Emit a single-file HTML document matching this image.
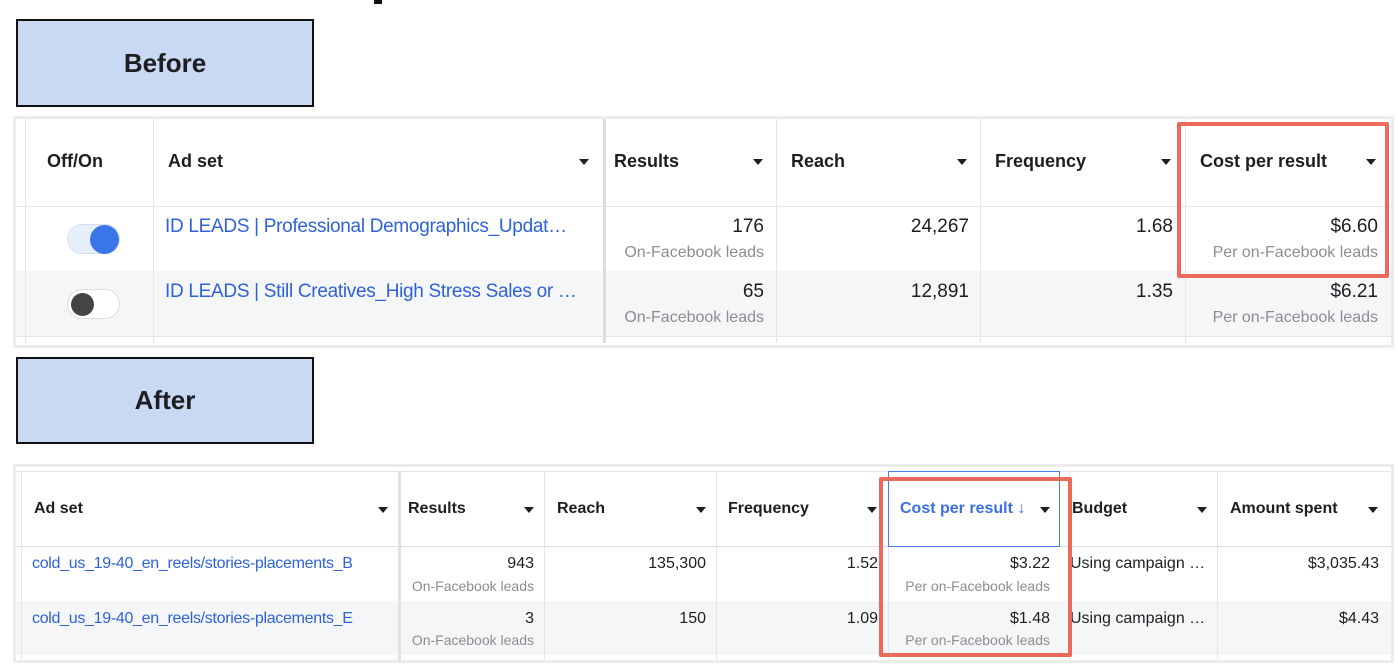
<!DOCTYPE html>
<html><head><meta charset="utf-8"><style>
*{margin:0;padding:0;box-sizing:border-box}
body{width:1398px;height:666px;background:#fff;position:relative;overflow:hidden;font-family:"Liberation Sans",Arial,sans-serif;color:#1c1e21}
.a{position:absolute}
.lbl{background:#c9d8f3;border:2px solid #111;font-weight:bold;font-size:26px;display:flex;align-items:center;justify-content:center}
.frame{border:3px solid #ececec;background:#fff}
.v{position:absolute;width:1px;background:#e4e6eb}
.h{position:absolute;height:1px;background:#e4e6eb}
.th{position:absolute;font-weight:bold}
.tri{position:absolute;width:0;height:0;border-left:5px solid transparent;border-right:5px solid transparent;border-top:6px solid #1c1e21}
.lnk{position:absolute;color:#2e62d9;white-space:nowrap;letter-spacing:-0.3px}
.num{position:absolute;text-align:right}
.sub{position:absolute;text-align:right;color:#8a8d91}
.red{position:absolute;border:4px solid #ec6a5c;border-radius:2px}
</style></head><body>
<div class="a" style="left:374px;top:0;width:8px;height:4px;background:#111"></div>
<div class="a lbl" style="left:16px;top:19px;width:298px;height:88px">Before</div>
<div class="a lbl" style="left:16px;top:357px;width:298px;height:87px">After</div>

<!-- BEFORE TABLE -->
<div class="a frame" style="left:13px;top:116px;width:1381px;height:232px"></div>
<div class="a" style="left:16px;top:271px;width:1375px;height:65px;background:#f5f6f7"></div>
<div class="h" style="left:16px;top:206px;width:1375px"></div>
<div class="h" style="left:16px;top:336px;width:1375px"></div>
<div class="v" style="left:25px;top:119px;height:224px"></div>
<div class="v" style="left:153px;top:119px;height:224px"></div>
<div class="v" style="left:603px;top:119px;height:224px;width:3px;background:#dcdde0"></div>
<div class="v" style="left:776px;top:119px;height:224px"></div>
<div class="v" style="left:980px;top:119px;height:224px"></div>
<div class="v" style="left:1185px;top:119px;height:224px"></div>
<div class="th" style="left:47px;top:151px;font-size:18px">Off/On</div>
<div class="th" style="left:168px;top:151px;font-size:18px">Ad set</div>
<div class="tri" style="left:579px;top:159px"></div>
<div class="th" style="left:614px;top:151px;font-size:18px">Results</div>
<div class="tri" style="left:753px;top:159px"></div>
<div class="th" style="left:791px;top:151px;font-size:18px">Reach</div>
<div class="tri" style="left:957px;top:159px"></div>
<div class="th" style="left:995px;top:151px;font-size:18px">Frequency</div>
<div class="tri" style="left:1161px;top:159px"></div>
<div class="th" style="left:1200px;top:151px;font-size:18px">Cost per result</div>
<div class="tri" style="left:1366px;top:159px"></div>
<div class="a" style="left:67px;top:224px;width:53px;height:30px;border-radius:15px;background:#e7effc;border:1px solid #d5def0"></div>
<div class="a" style="left:90px;top:225px;width:29px;height:29px;border-radius:50%;background:#3b76e8"></div>
<div class="a" style="left:67px;top:289px;width:53px;height:30px;border-radius:15px;background:#fff;border:1px solid #dcdde0"></div>
<div class="a" style="left:71px;top:293px;width:23px;height:23px;border-radius:50%;background:#444"></div>
<div class="lnk" style="left:165px;top:216px;font-size:19px">ID LEADS | Professional Demographics_Updat…</div>
<div class="lnk" style="left:165px;top:281px;font-size:19px">ID LEADS | Still Creatives_High Stress Sales or …</div>
<div class="num" style="left:606px;width:158px;top:216px;font-size:19px">176</div>
<div class="sub" style="left:606px;width:158px;top:244px;font-size:16px">On-Facebook leads</div>
<div class="num" style="left:606px;width:158px;top:281px;font-size:19px">65</div>
<div class="sub" style="left:606px;width:158px;top:309px;font-size:16px">On-Facebook leads</div>
<div class="num" style="left:780px;width:189px;top:216px;font-size:19px">24,267</div>
<div class="num" style="left:780px;width:189px;top:281px;font-size:19px">12,891</div>
<div class="num" style="left:984px;width:189px;top:216px;font-size:19px">1.68</div>
<div class="num" style="left:984px;width:189px;top:281px;font-size:19px">1.35</div>
<div class="num" style="left:1190px;width:188px;top:216px;font-size:19px">$6.60</div>
<div class="sub" style="left:1190px;width:188px;top:244px;font-size:16px">Per on-Facebook leads</div>
<div class="num" style="left:1190px;width:188px;top:281px;font-size:19px">$6.21</div>
<div class="sub" style="left:1190px;width:188px;top:309px;font-size:16px">Per on-Facebook leads</div>
<div class="red" style="left:1177px;top:122px;width:212px;height:156px"></div>

<!-- AFTER TABLE -->
<div class="a frame" style="left:13px;top:464px;width:1381px;height:199px"></div>
<div class="a" style="left:16px;top:601px;width:1375px;height:54px;background:#f5f6f7"></div>
<div class="h" style="left:16px;top:471px;width:1375px"></div>
<div class="h" style="left:16px;top:546px;width:1375px;background:#dcdde0"></div>
<div class="v" style="left:21px;top:471px;height:190px"></div>
<div class="v" style="left:398px;top:471px;height:190px;width:3px;background:#e0e1e4"></div>
<div class="v" style="left:544px;top:471px;height:190px"></div>
<div class="v" style="left:716px;top:471px;height:190px"></div>
<div class="v" style="left:888px;top:471px;height:190px"></div>
<div class="v" style="left:1069px;top:471px;height:190px"></div>
<div class="v" style="left:1217px;top:471px;height:190px"></div>
<div class="a" style="left:888px;top:471px;width:172px;height:76px;border:1px solid #4a7ee8"></div>
<div class="th" style="left:34px;top:500px;font-size:16px">Ad set</div>
<div class="tri" style="left:378px;top:507px"></div>
<div class="th" style="left:408px;top:500px;font-size:16px">Results</div>
<div class="tri" style="left:524px;top:507px"></div>
<div class="th" style="left:557px;top:500px;font-size:16px">Reach</div>
<div class="tri" style="left:696px;top:507px"></div>
<div class="th" style="left:728px;top:500px;font-size:16px">Frequency</div>
<div class="tri" style="left:867px;top:507px"></div>
<div class="th" style="left:900px;top:500px;font-size:16px;color:#3a70e3">Cost per result ↓</div>
<div class="tri" style="left:1040px;top:507px"></div>
<div class="th" style="left:1072px;top:500px;font-size:16px">Budget</div>
<div class="tri" style="left:1197px;top:507px"></div>
<div class="th" style="left:1230px;top:500px;font-size:16px">Amount spent</div>
<div class="tri" style="left:1368px;top:507px"></div>
<div class="lnk" style="left:32px;top:555px;font-size:16px">cold_us_19-40_en_reels/stories-placements_B</div>
<div class="lnk" style="left:32px;top:610px;font-size:16px">cold_us_19-40_en_reels/stories-placements_E</div>
<div class="num" style="left:401px;width:133px;top:555px;font-size:16px">943</div>
<div class="sub" style="left:401px;width:133px;top:578px;font-size:14px">On-Facebook leads</div>
<div class="num" style="left:401px;width:133px;top:610px;font-size:16px">3</div>
<div class="sub" style="left:401px;width:133px;top:632px;font-size:14px">On-Facebook leads</div>
<div class="num" style="left:548px;width:158px;top:555px;font-size:16px">135,300</div>
<div class="num" style="left:548px;width:158px;top:610px;font-size:16px">150</div>
<div class="num" style="left:720px;width:158px;top:555px;font-size:16px">1.52</div>
<div class="num" style="left:720px;width:158px;top:610px;font-size:16px">1.09</div>
<div class="num" style="left:892px;width:158px;top:555px;font-size:16px">$3.22</div>
<div class="sub" style="left:892px;width:158px;top:578px;font-size:14px">Per on-Facebook leads</div>
<div class="num" style="left:892px;width:158px;top:610px;font-size:16px">$1.48</div>
<div class="sub" style="left:892px;width:158px;top:632px;font-size:14px">Per on-Facebook leads</div>
<div class="a" style="left:1070px;top:555px;font-size:16px;white-space:nowrap">Using campaign …</div>
<div class="a" style="left:1070px;top:610px;font-size:16px;white-space:nowrap">Using campaign …</div>
<div class="num" style="left:1221px;width:158px;top:555px;font-size:16px">$3,035.43</div>
<div class="num" style="left:1221px;width:158px;top:610px;font-size:16px">$4.43</div>
<div class="red" style="left:879px;top:477px;width:193px;height:180px"></div>
</body></html>
